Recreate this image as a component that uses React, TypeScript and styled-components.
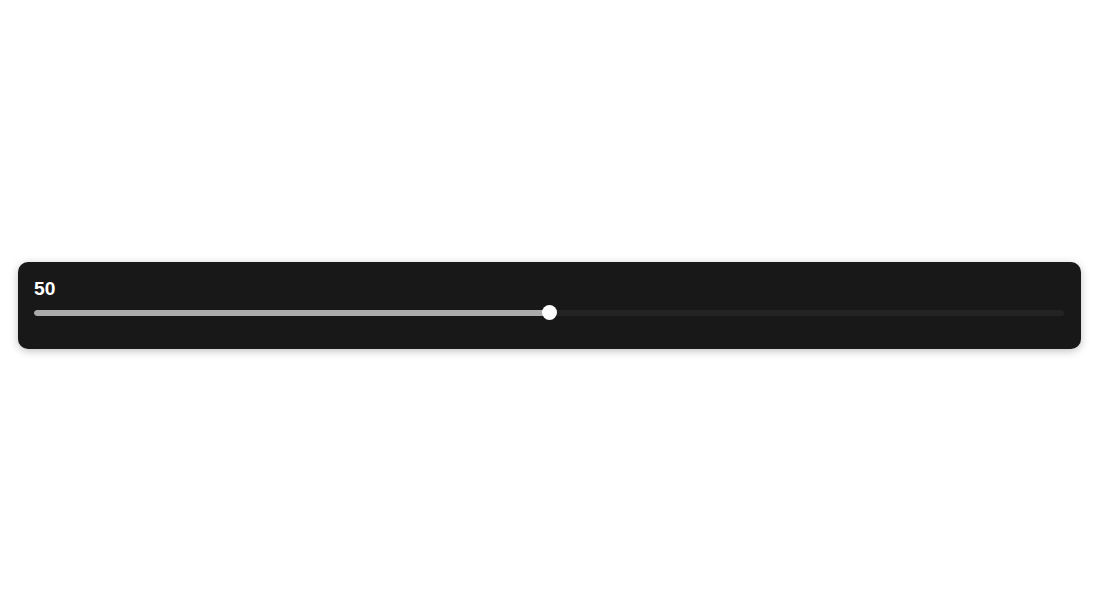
import React, { useState } from 'react';
import styled, { createGlobalStyle } from 'styled-components';

const GlobalStyle = createGlobalStyle`
  html, body {
    margin: 0;
    padding: 0;
    background: #ffffff;
    font-family: "Liberation Sans", Arial, sans-serif;
  }
`;

const Page = styled.div`
  box-sizing: border-box;
  height: 611px;
  padding: 0 19px 0 18px;
  display: flex;
  align-items: center;
`;

const Card = styled.div`
  box-sizing: border-box;
  width: 100%;
  height: 87px;
  padding: 16px 17px 0 16px;
  background: #181818;
  border-radius: 10px;
  box-shadow: 0 2px 8px rgba(0, 0, 0, 0.25);
  display: flex;
  flex-direction: column;
`;

const Value = styled.div`
  color: #ffffff;
  font-size: 19.2px;
  font-weight: 700;
  line-height: 21px;
`;

const SliderRoot = styled.div`
  position: relative;
  height: 15px;
  margin-top: 6px;
  display: flex;
  align-items: center;
`;

const Track = styled.div`
  width: 100%;
  height: 6px;
  border-radius: 3px;
  background: #232323;
  overflow: hidden;
`;

const Fill = styled.div`
  height: 100%;
  background: #ababab;
  border-radius: 3px;
`;

const Thumb = styled.div`
  position: absolute;
  top: 0;
  width: 15px;
  height: 15px;
  margin-left: -7.5px;
  border-radius: 50%;
  background: #ffffff;
`;

export default function App() {
  const [value] = useState(50);
  const pct = `${value}%`;

  return (
    <>
      <GlobalStyle />
      <Page>
        <Card>
          <Value>{value}</Value>
          <SliderRoot>
            <Track>
              <Fill style={{ width: pct }} />
            </Track>
            <Thumb style={{ left: pct }} />
          </SliderRoot>
        </Card>
      </Page>
    </>
  );
}
